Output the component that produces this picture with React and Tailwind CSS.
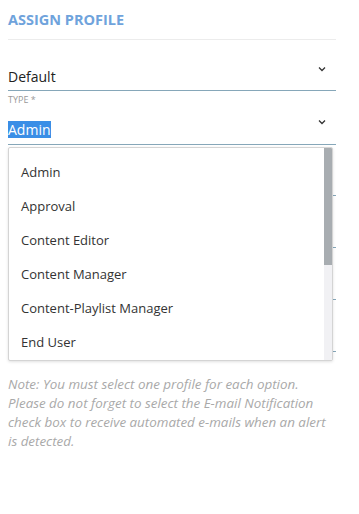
import React from 'react';

const options = ['Admin', 'Approval', 'Content Editor', 'Content Manager', 'Content-Playlist Manager', 'End User'];

function Chevron() {
  return (
    <svg width="8" height="6" viewBox="0 0 8 6" className="mr-[10px] self-start mt-[-1px]">
      <path d="M1 1.5 L4 4.5 L7 1.5" fill="none" stroke="#333" strokeWidth="1.3" />
    </svg>
  );
}

export default function App() {
  return (
    <div className="min-h-[514px] w-[359px] bg-white" style={{ fontFamily: '"Open Sans", "Noto Sans", sans-serif' }}>
      <div className="relative ml-2 w-[328px]">
        <h2 className="pt-[10px] pb-[9px] text-[14.5px] font-bold leading-[20px] text-[#6fa3dc] border-b border-[#ececec]">
          ASSIGN PROFILE
        </h2>

        <div className="flex justify-between border-b border-[#86a7b9] pt-[27px] pb-[3px]">
          <div className="text-[14px] leading-[20px] text-[#222]">Default</div>
          <Chevron />
        </div>

        <div className="mt-[3px] text-[9px] leading-[12px] text-[#999]">TYPE *</div>
        <div className="flex justify-between border-b border-[#86a7b9] pt-[14px] pb-[4px]">
          <div className="text-[14px] leading-[20px]">
            <span className="inline-block bg-[#3a8ee6] leading-[17px] text-white">Admin</span>
          </div>
          <Chevron />
        </div>

        <div className="h-[51px] border-b border-[#86a7b9]" />
        <div className="h-[52px] border-b border-[#86a7b9]" />
        <div className="h-[52px] border-b border-[#86a7b9]" />
        <div className="h-[52px] border-b border-[#86a7b9]" />

        <p className="mt-[23px] text-[13.4px] italic leading-[19px] text-[#a9a9a9]">
          Note: You must select one profile for each option. Please do not forget to select the E-mail Notification check box to receive automated e-mails when an alert is detected.
        </p>

        <div className="absolute left-0 top-[147px] flex h-[214px] w-[325px] overflow-hidden rounded-[2px] border border-[#d4d4d4] bg-white shadow-[0_1px_3px_rgba(0,0,0,0.12)]">
          <ul className="flex-1 pt-[7px]">
            {options.map((o) => (
              <li key={o} className="h-[34px] pl-[12px] text-[13px] leading-[34px] text-[#333]">
                {o}
              </li>
            ))}
          </ul>
          <div className="w-[8px] bg-[#f1f1f4]">
            <div className="h-[117px] bg-[#a8adb1]" />
          </div>
        </div>
      </div>
    </div>
  );
}
